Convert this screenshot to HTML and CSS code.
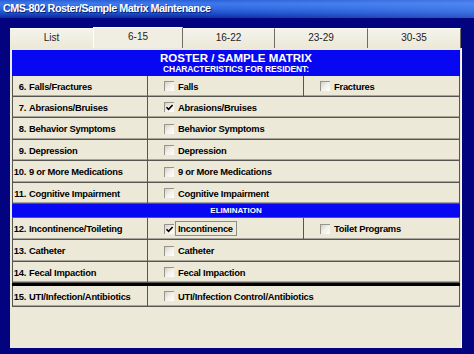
FILE: index.html
```html
<!DOCTYPE html>
<html>
<head>
<meta charset="utf-8">
<link rel="stylesheet" href="styles.css">
</head>
<body>
<div class="window">
  <div class="titlebar">CMS-802 Roster/Sample Matrix Maintenance</div>
  <div class="client">
    <div class="panel">
      <div class="tabs">
        <div class="tab t1">List</div>
        <div class="tab t2 active">6-15</div>
        <div class="tab t3">16-22</div>
        <div class="tab t4">23-29</div>
        <div class="tab t5">30-35</div>
      </div>
      <div class="page">
        <div class="matrix">
          <div class="head span3">
            <div class="h1">ROSTER / SAMPLE MATRIX</div>
            <div class="h2">CHARACTERISTICS FOR RESIDENT:</div>
          </div>

          <div class="label"><span class="num">6.</span> Falls/Fractures</div>
          <div class="cell"><span class="cb"></span>Falls</div>
          <div class="cell last"><span class="cb"></span>Fractures</div>

          <div class="label"><span class="num">7.</span> Abrasions/Bruises</div>
          <div class="cell last span2"><span class="cb checked"><svg viewBox="0 0 9 9"><path d="M1.5 4.2 L3.6 6.4 L7.6 2" /></svg></span>Abrasions/Bruises</div>

          <div class="label"><span class="num">8.</span> Behavior Symptoms</div>
          <div class="cell last span2"><span class="cb"></span>Behavior Symptoms</div>

          <div class="label"><span class="num">9.</span> Depression</div>
          <div class="cell last span2"><span class="cb"></span>Depression</div>

          <div class="label"><span class="num">10.</span> 9 or More Medications</div>
          <div class="cell last span2"><span class="cb"></span>9 or More Medications</div>

          <div class="label"><span class="num">11.</span> Cognitive Impairment</div>
          <div class="cell last span2"><span class="cb"></span>Cognitive Impairment</div>

          <div class="subhead span3">ELIMINATION</div>

          <div class="label"><span class="num">12.</span> Incontinence/Toileting</div>
          <div class="cell"><span class="cb checked"><svg viewBox="0 0 9 9"><path d="M1.5 4.2 L3.6 6.4 L7.6 2" /></svg></span><span class="focus">Incontinence</span></div>
          <div class="cell last"><span class="cb"></span>Toilet Programs</div>

          <div class="label"><span class="num">13.</span> Catheter</div>
          <div class="cell last span2"><span class="cb"></span>Catheter</div>

          <div class="label"><span class="num">14.</span> Fecal Impaction</div>
          <div class="cell last span2"><span class="cb"></span>Fecal Impaction</div>

          <div class="rule span3"></div>

          <div class="label"><span class="num">15.</span> UTI/Infection/Antibiotics</div>
          <div class="cell last span2"><span class="cb"></span>UTI/Infection Control/Antibiotics</div>
        </div>
      </div>
    </div>
  </div>
</div>
</body>
</html>
```
FILE: styles.css
```css
html, body {
  margin: 0;
  padding: 0;
}
body {
  width: 474px;
  height: 354px;
  overflow: hidden;
  background: #03037f;
  font-family: "Liberation Sans", Arial, sans-serif;
}
.window {
  display: flex;
  flex-direction: column;
}
.titlebar {
  height: 18px;
  line-height: 16px;
  padding-left: 3px;
  color: #fff;
  font-family: "Liberation Sans", Arial, sans-serif;
  font-weight: bold;
  font-size: 10.8px;
  letter-spacing: -0.5px;
  text-shadow: 1px 1px 0 #0b2273;
  background:
    linear-gradient(90deg, rgba(255,255,255,0) 40%, rgba(110,160,255,0.35) 100%),
    linear-gradient(180deg, #2a5fd6 0%, #3c78ea 20%, #2c66e0 50%, #1a4cc8 75%, #0c2a9e 100%);
}
.client {
  padding: 9px 0 0 10px;
}
.panel {
  width: 452px;
}
.tabs {
  display: flex;
  height: 21px;
  align-items: flex-end;
}
.tab {
  box-sizing: border-box;
  height: 20px;
  display: flex;
  align-items: center;
  justify-content: center;
  padding-bottom: 2px;
  background: linear-gradient(180deg, #f4f3ec 0%, #ece9d8 100%);
  border-top: 1px solid #fbfaf5;
  border-right: 1px solid #6f6d63;
  font-size: 10px;
  color: #222;
}
.tab.active {
  height: 21px;
  padding-bottom: 3px;
  background: #f0eee2;
  border-left: 1px solid #ffffff;
}
.t1 { width: 83px; border-right: none; }
.t2 { width: 90px; }
.t3 { width: 92px; }
.t4 { width: 93px; }
.t5 { width: 93px; }
.page {
  box-sizing: border-box;
  height: 300px;
  background: #ece9d8;
  border-right: 1px solid #f8f7f0;
  padding: 2px 1px 0 2px;
}
.matrix {
  display: grid;
  grid-template-columns: 136px 156px 156px;
  grid-template-rows: 26px 21px 21px 22px 21px 22px 21px 14px 22px 22px 21px 3px 21px;
  font-family: "Liberation Sans", Arial, sans-serif;
  font-weight: bold;
  font-size: 9.4px;
  letter-spacing: -0.25px;
  color: #000;
}
.span2 { grid-column: span 2; }
.span3 { grid-column: span 3; }
.head {
  background: #0707f2;
  color: #fff;
  display: flex;
  flex-direction: column;
  align-items: center;
  justify-content: center;
  letter-spacing: 0;
}
.h1 {
  font-size: 11.5px;
  line-height: 12px;
}
.h2 {
  font-size: 8.5px;
  line-height: 10px;
  letter-spacing: -0.1px;
}
.subhead {
  background: #0707f2;
  color: #fff;
  font-size: 8px;
  letter-spacing: 0;
  display: flex;
  align-items: center;
  justify-content: center;
  border-bottom: 1px solid #5b5a52;
  box-sizing: border-box;
}
.rule {
  background: #000;
}
.label, .cell {
  box-sizing: border-box;
  display: flex;
  align-items: center;
  border-bottom: 1px solid #575650;
  border-right: 1px solid #575650;
  box-shadow: inset 0 -1px 0 #a8a69c;
  white-space: nowrap;
}
.label {
  border-left: 1px solid #575650;
}
.num {
  display: inline-block;
  width: 13px;
  text-align: right;
  margin-right: 3px;
}
.cell {
  padding-left: 16px;
}
.cb {
  box-sizing: border-box;
  width: 10px;
  height: 10px;
  margin-right: 4px;
  flex: none;
  border-top: 1px solid #97958b;
  border-left: 1px solid #97958b;
  background: linear-gradient(135deg, #d3d1c6 0%, #f0efe8 45%, #ffffff 100%);
  display: flex;
}
.cb svg {
  width: 9px;
  height: 9px;
}
.cb path {
  fill: none;
  stroke: #000;
  stroke-width: 1.6;
}
.focus {
  border: 1px solid #8d8c86;
  padding: 1px 3px 1px 2px;
  margin-left: -3px;
}
```
